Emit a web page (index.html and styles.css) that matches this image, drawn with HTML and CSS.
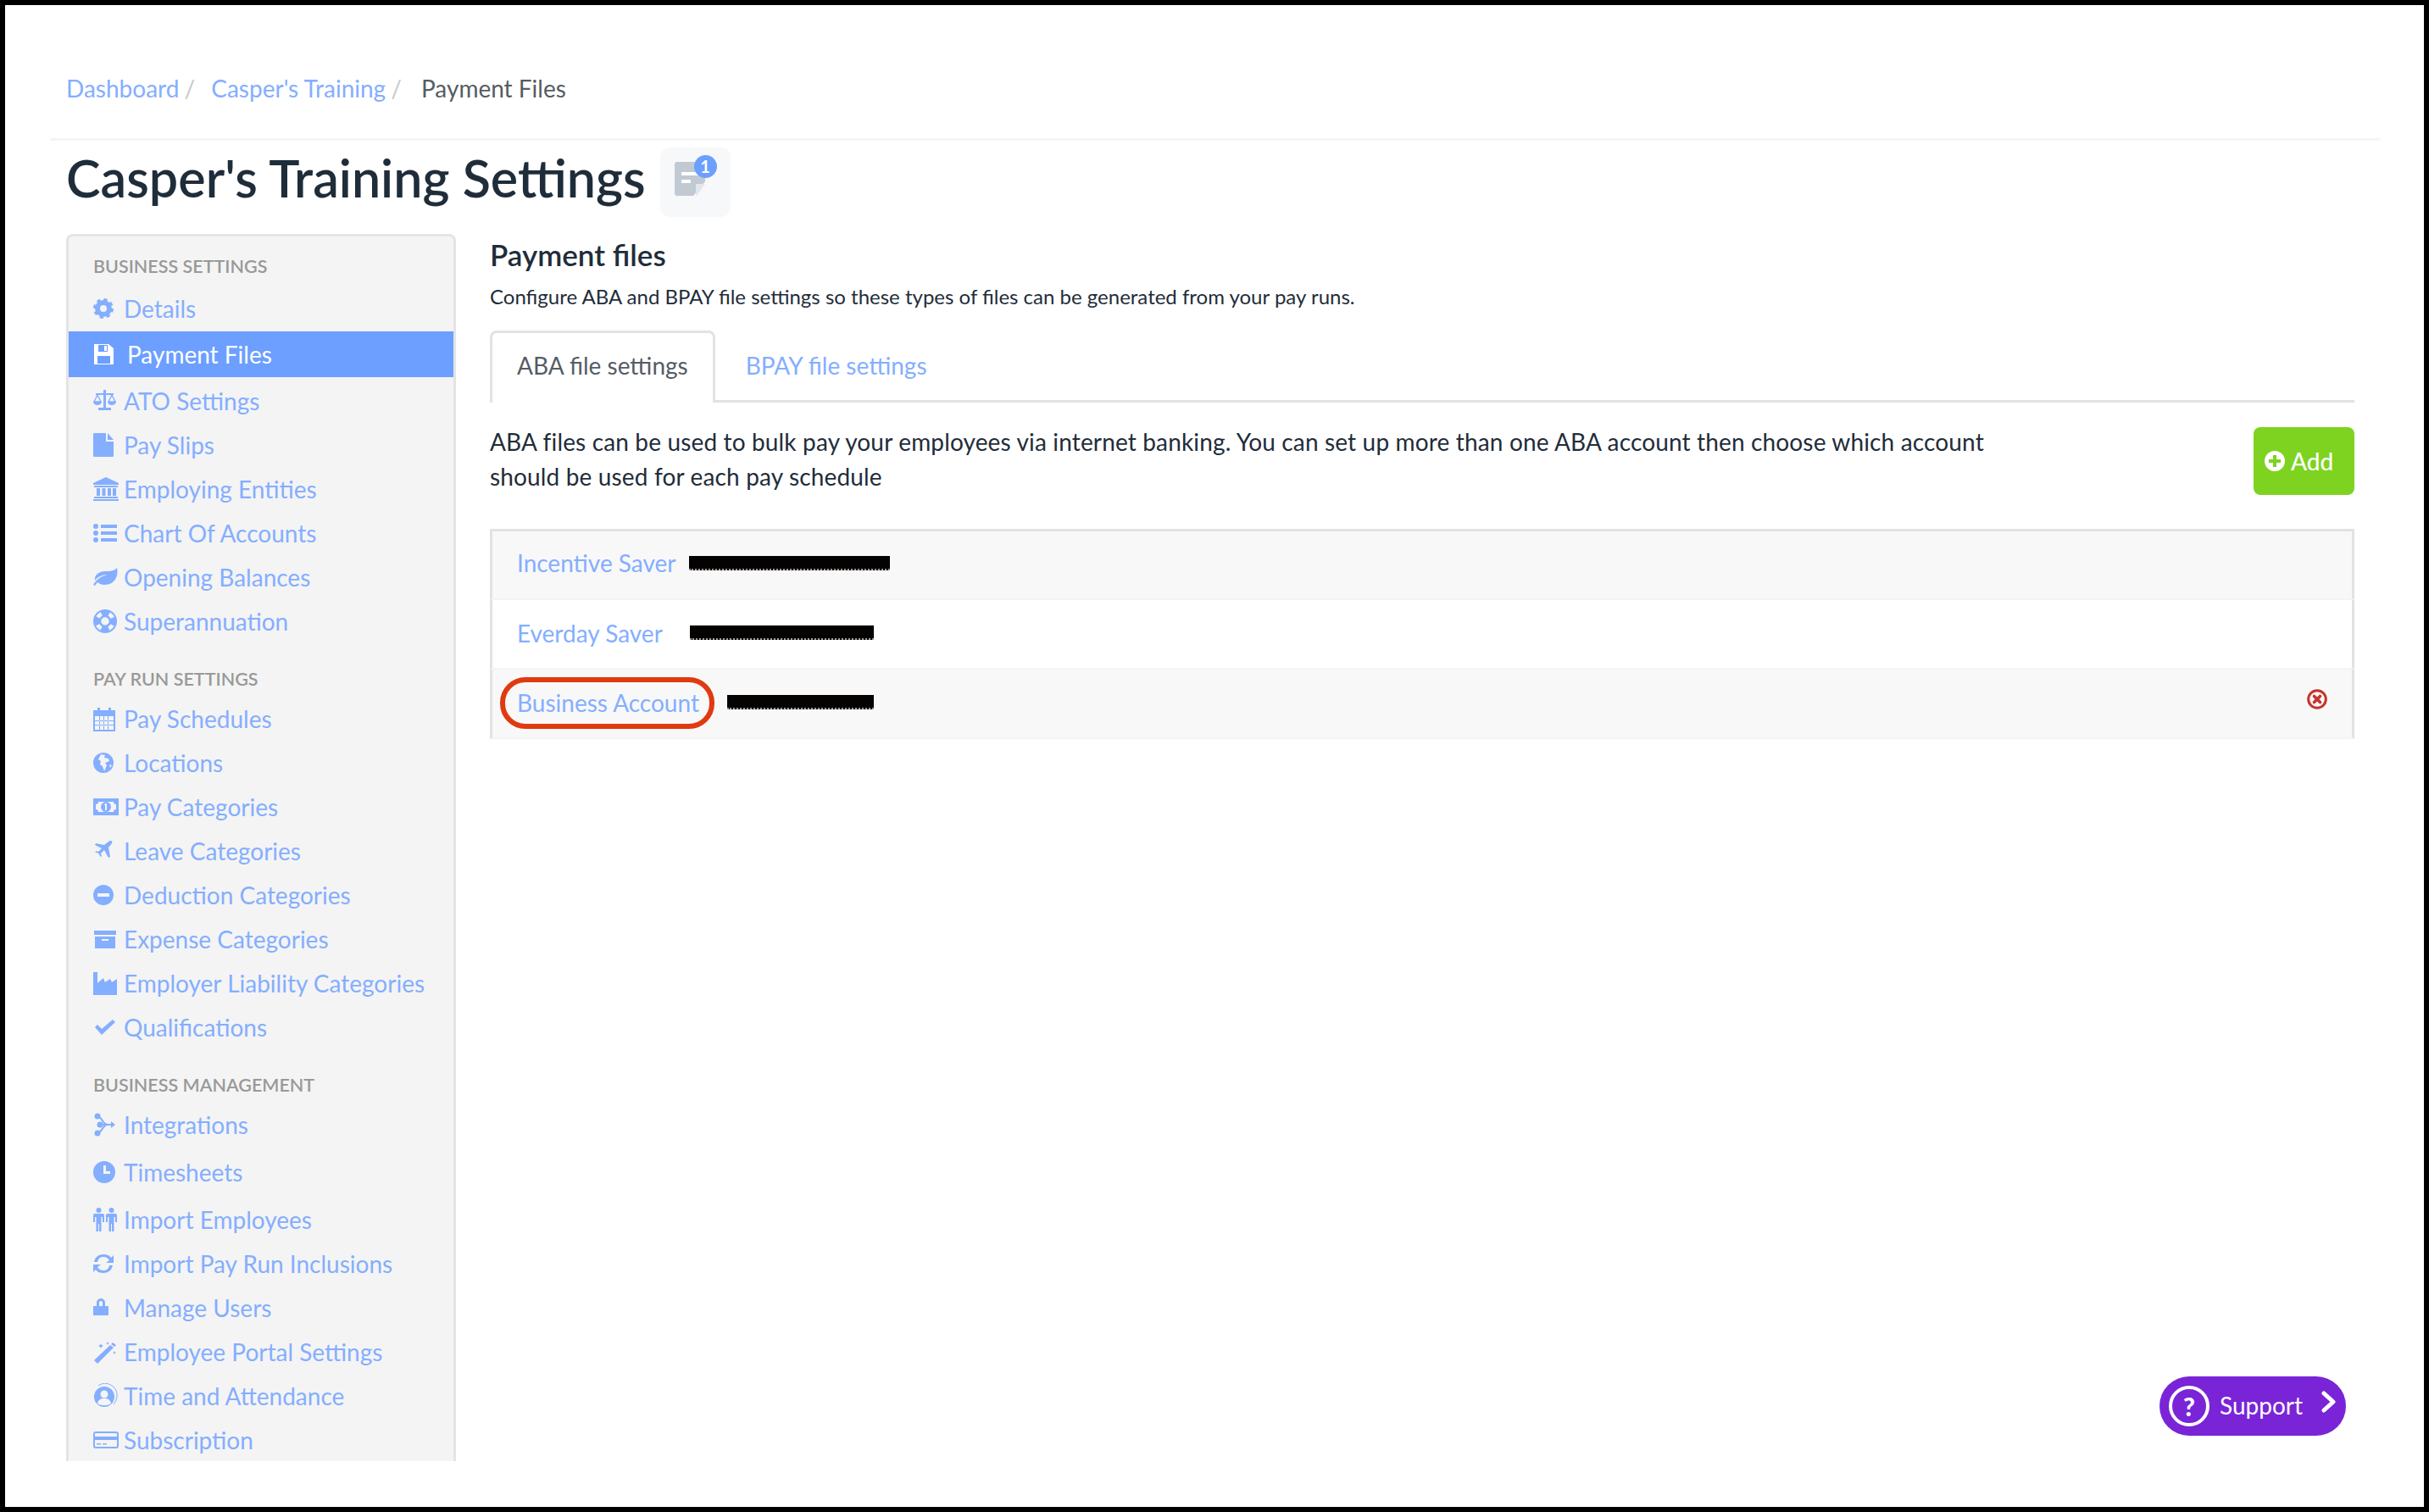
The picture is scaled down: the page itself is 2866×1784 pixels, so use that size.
FILE: index.html
```html
<!DOCTYPE html>
<html lang="en">
<head>
    <meta charset="UTF-8">
    <title>Casper's Training Settings</title>
    <link rel="stylesheet" href="styles.css">
</head>
<body>
    <nav class="breadcrumb">
        <a href="#">Dashboard</a><span class="sep">/</span>
        <a href="#">Casper's Training</a><span class="sep">/</span>
        <span class="current">Payment Files</span>
    </nav>

    <header class="page-head">
        <h1>Casper's Training Settings</h1>
        <div class="note-tile">
            <svg width="40" height="40" viewBox="0 0 40 40"><path d="M3 0h30a3 3 0 0 1 3 3v20L22 40H3a3 3 0 0 1-3-3V3a3 3 0 0 1 3-3z" fill="#c1c9d3"/><path d="M25 26h11L26 40h-1z" fill="#e3e7ec"/><rect x="8" y="12" width="20" height="4" fill="#fff"/><rect x="8" y="21" width="11" height="4" fill="#fff"/></svg>
            <span class="note-badge">1</span>
        </div>
    </header>

    <div class="layout">
        <aside class="sidebar">
            <h4 class="nav-head">Business Settings</h4>
            <a class="nav-item" href="#"><svg viewBox="0 0 30 30"><circle cx="12" cy="15" r="7" fill="none" stroke="currentColor" stroke-width="6"/><circle cx="12" cy="15" r="10.5" fill="none" stroke="currentColor" stroke-width="3" stroke-dasharray="4.2 4.05"/></svg>Details</a>
            <a class="nav-item active" href="#"><svg viewBox="0 0 30 30"><path d="M1 3h17l6 5v19H1zM6 4v8h11V4zM5 17v9h15v-9z" fill="currentColor" fill-rule="evenodd"/><rect x="13" y="5" width="3" height="6" fill="currentColor"/></svg>Payment Files</a>
            <a class="nav-item" href="#"><svg viewBox="0 0 30 30"><path d="M12 2h3v21h6v3H6v-3h6zM3 6h21v2H3z" fill="currentColor"/><path d="M5 8l-4 8h8zM22 8l-4 8h8z" fill="none" stroke="currentColor" stroke-width="1.4"/><path d="M0 16h10a5 4 0 0 1-10 0zM17 16h10a5 4 0 0 1-10 0z" fill="currentColor"/></svg>ATO Settings</a>
            <a class="nav-item" href="#"><svg viewBox="0 0 30 30"><path d="M1 1h14v10h9v17a1 1 0 0 1-1 1H1a1 1 0 0 1-1-1V2a1 1 0 0 1 1-1zM17 1l7 8h-7z" fill="currentColor"/></svg>Pay Slips</a>
            <a class="nav-item" href="#"><svg viewBox="0 0 30 30"><path d="M15 1l15 7v2H0V8zM1 11h28v2H1zM4 14h4v9H4zM10.500 14h4v9h-4zM17 14h4v9h-4zM23 14h4v9h-4zM1 24h28v2H1zM0 27h30v2H0z" fill="currentColor"/></svg>Employing Entities</a>
            <a class="nav-item" href="#"><svg viewBox="0 0 30 30"><circle cx="3" cy="7" r="3" fill="currentColor"/><circle cx="3" cy="15" r="3" fill="currentColor"/><circle cx="3" cy="23" r="3" fill="currentColor"/><path d="M9 5h19v4H9zM9 13h19v4H9zM9 21h19v4H9z" fill="currentColor"/></svg>Chart Of Accounts</a>
            <a class="nav-item" href="#"><svg viewBox="0 0 30 30"><path d="M28 4c2 9-2 20-15 20-3 0-6-1-8-3l-3 4-2-1c3-5 8-10 17-12-7 0-12 3-15 7C1 12 7 8 14 8c6 0 11 0 14-4z" fill="currentColor"/></svg>Opening Balances</a>
            <a class="nav-item" href="#"><svg viewBox="0 0 30 30"><circle cx="14" cy="15" r="13" fill="none" stroke="currentColor" stroke-width="2"/><circle cx="14" cy="15" r="6" fill="none" stroke="currentColor" stroke-width="2.500"/><circle cx="14" cy="15" r="9.500" fill="none" stroke="currentColor" stroke-width="6" stroke-dasharray="9 5.920" stroke-dashoffset="4.500"/></svg>Superannuation</a>

            <h4 class="nav-head nav-head-next">Pay Run Settings</h4>
            <a class="nav-item" href="#"><svg viewBox="0 0 30 30"><path d="M0 5h5V2h3v3h10V2h3v3h5v25H0zM2 12v16h22V12zM7 12v16h1V12zM12 12v16h1V12zM17 12v16h1V12zM2 17h22v1H2zM2 22h22v1H2z" fill="currentColor" fill-rule="evenodd"/></svg>Pay Schedules</a>
            <a class="nav-item" href="#"><svg viewBox="0 0 30 30"><circle cx="12" cy="15" r="12" fill="currentColor"/><path d="M9 5l5 1-1 3 5 1 1 3-5 2 2 3-3 7-2-6-3-2 1-4-3-2zM19 17l3 1-2 3z" fill="#f4f4f4"/></svg>Locations</a>
            <a class="nav-item" href="#"><svg viewBox="0 0 30 30"><path d="M0 5h30v20H0zM6 9a3 3 0 0 1-3 3v6a3 3 0 0 1 3 3h18a3 3 0 0 1 3-3v-6a3 3 0 0 1-3-3z" fill="currentColor" fill-rule="evenodd"/><circle cx="15" cy="15" r="6" fill="currentColor"/><path d="M14 11h2v8h-2zM12.500 12.500l2-1.500v2z" fill="#f4f4f4"/></svg>Pay Categories</a>
            <a class="nav-item" href="#"><svg viewBox="0 0 30 30"><path d="M21 3c1 0 2 1 1 3l-4 5 2 11-2 1-5-9-4 4 1 3-1.500 1-2-4-4-1.500L3 15l3 1 4-4-8-4 1-2 10 2 5-4c1-1 2-1 3-1z" fill="currentColor"/></svg>Leave Categories</a>
            <a class="nav-item" href="#"><svg viewBox="0 0 30 30"><path d="M12 3a12 12 0 1 1 0 24 12 12 0 0 1 0-24zM5 13v4h14v-4z" fill="currentColor" fill-rule="evenodd"/></svg>Deduction Categories</a>
            <a class="nav-item" href="#"><svg viewBox="0 0 30 30"><path d="M1 5h26v5H1zM2 12h24v14H2zM10 15v2h8v-2z" fill="currentColor" fill-rule="evenodd"/></svg>Expense Categories</a>
            <a class="nav-item" href="#"><svg viewBox="0 0 30 30"><path d="M0 2h5v13l7-6 2 5 6-4 2 4 6-4v19H0z" fill="currentColor"/></svg>Employer Liability Categories</a>
            <a class="nav-item" href="#"><svg viewBox="0 0 30 30"><path d="M2 15l3-3 5 5L23 6l3 3L10 24z" fill="currentColor"/></svg>Qualifications</a>

            <h4 class="nav-head nav-head-next">Business Management</h4>
            <a class="nav-item" href="#"><svg viewBox="0 0 30 30"><circle cx="5" cy="5" r="3.500" fill="currentColor"/><circle cx="5" cy="25" r="3.500" fill="currentColor"/><circle cx="8" cy="15" r="3.500" fill="currentColor"/><path d="M5 5c5 0 6 10 12 10M5 25c5 0 6-10 12-10M8 15h13" fill="none" stroke="currentColor" stroke-width="2"/><path d="M21 11l5 4-5 4z" fill="currentColor"/></svg>Integrations</a>
            <a class="nav-item nav-item-gap" href="#"><svg viewBox="0 0 30 30"><path d="M13 2a13 13 0 1 1 0 26 13 13 0 0 1 0-26zM12 7v10h8v-3h-5V7z" fill="currentColor" fill-rule="evenodd"/></svg>Timesheets</a>
            <a class="nav-item nav-item-gap" href="#"><svg viewBox="0 0 30 30"><circle cx="6.500" cy="4" r="3" fill="currentColor"/><circle cx="21.500" cy="4" r="3" fill="currentColor"/><path d="M2 8h9a2 2 0 0 1 2 2v8h-2v-6H9.500v17H7v-9H6v9H3.500V12H2v6H0v-8a2 2 0 0 1 2-2zM17 8h9a2 2 0 0 1 2 2v8h-2v-6h-1.500v17H22v-9h-1v9h-2.500V12H17v6h-2v-8a2 2 0 0 1 2-2z" fill="currentColor"/></svg>Import Employees</a>
            <a class="nav-item" href="#"><svg viewBox="0 0 30 30"><path d="M1 13C2 7 7 4 12 4c4 0 7 1 9 4l3-3v9H15l4-3c-2-3-4-4-7-4-4 0-6 2-7 6zM23 17c-1 6-6 9-11 9-4 0-7-1-9-4l-3 3v-9h9l-4 3c2 3 4 4 7 4 4 0 6-2 7-6z" fill="currentColor"/></svg>Import Pay Run Inclusions</a>
            <a class="nav-item" href="#"><svg viewBox="0 0 30 30"><path d="M4 13V9a5 5 0 0 1 10 0v4h3a1 1 0 0 1 1 1v9a1 1 0 0 1-1 1H1a1 1 0 0 1-1-1v-9a1 1 0 0 1 1-1zM7 13h4V9a2 2 0 0 0-4 0z" fill="currentColor" fill-rule="evenodd"/></svg>Manage Users</a>
            <a class="nav-item" href="#"><svg viewBox="0 0 30 30"><path d="M1 25L20 7l4 3L5 29zM21 6l2-2 4 3-2 2z" fill="currentColor"/><path d="M9 5l1 2 2 1-2 1-1 2-1-2-2-1 2-1zM17 3l.7 1.500 1.300.5-1.300.5L17 7l-.7-1.500L15 5l1.300-.5zM25 14l.7 1.500 1.300.5-1.300.5-.7 1.500-.7-1.500L23 16l1.300-.5z" fill="currentColor"/></svg>Employee Portal Settings</a>
            <a class="nav-item" href="#"><svg viewBox="0 0 30 30"><circle cx="13" cy="16" r="12" fill="currentColor"/><circle cx="13" cy="13" r="4.500" fill="#f4f4f4"/><path d="M5 24c1-5 4-6 8-6s7 1 8 6c-4 3-12 3-16 0z" fill="#f4f4f4"/><path d="M6 3a14 14 0 0 1 22 13 14 14 0 0 1-4 9" fill="none" stroke="currentColor" stroke-width="1"/></svg>Time and Attendance</a>
            <a class="nav-item" href="#"><svg viewBox="0 0 30 30"><path d="M3 5h24a3 3 0 0 1 3 3v14a3 3 0 0 1-3 3H3a3 3 0 0 1-3-3V8a3 3 0 0 1 3-3zM2 8v3h26V8a1 1 0 0 0-1-1H3a1 1 0 0 0-1 1zM2 15v7a1 1 0 0 0 1 1h24a1 1 0 0 0 1-1v-7zM4 19h5v1.500H4zM11 19h5v1.500h-5z" fill="currentColor" fill-rule="evenodd"/></svg>Subscription</a>
        </aside>

        <main class="content">
            <h2>Payment files</h2>
            <p class="lead">Configure ABA and BPAY file settings so these types of files can be generated from your pay runs.</p>

            <div class="tabs">
                <a class="tab active" href="#">ABA file settings</a>
                <a class="tab" href="#">BPAY file settings</a>
            </div>

            <div class="intro">
                <p>ABA files can be used to bulk pay your employees via internet banking. You can set up more than one ABA account then choose which account should be used for each pay schedule</p>
                <a class="btn-add" href="#"><svg width="24" height="24" viewBox="0 0 24 24"><path d="M12 0a12 12 0 1 1 0 24 12 12 0 0 1 0-24zM10 5v5H5v4h5v5h4v-5h5v-4h-5V5z" fill="currentColor" fill-rule="evenodd"/></svg>Add</a>
            </div>

            <div class="accounts">
                <div class="account">
                    <a class="account-name" href="#">Incentive Saver</a>
                    <span class="redact redact-long"></span>
                </div>
                <div class="account">
                    <a class="account-name" href="#">Everday Saver</a>
                    <span class="redact redact-mid"></span>
                </div>
                <div class="account">
                    <a class="account-name circled" href="#">Business Account</a>
                    <span class="redact redact-short"></span>
                    <a class="delete" href="#"><svg width="24" height="24" viewBox="0 0 24 24"><circle cx="12" cy="12" r="10.300" fill="none" stroke="currentColor" stroke-width="3"/><path d="M8.500 8.500l7 7M15.500 8.500l-7 7" stroke="currentColor" stroke-width="3.600" stroke-linecap="round"/></svg></a>
                </div>
            </div>
        </main>
    </div>

    <a class="support" href="#">
        <span class="support-q">?</span>
        <span class="support-label">Support</span>
        <svg width="18" height="26" viewBox="0 0 18 26"><path d="M3 3l11 10L3 23" fill="none" stroke="currentColor" stroke-width="5" stroke-linecap="round" stroke-linejoin="round"/></svg>
    </a>
</body>
</html>
```

FILE: styles.css
```css
* {
    box-sizing: border-box;
}

body {
    margin: 0;
    height: 1784px;
    position: relative;
    overflow: hidden;
    background: #fff;
    border: 6px solid #000;
    font-family: Lato, "Open Sans", sans-serif;
    font-size: 28px;
    color: #1f2d3a;
}

a {
    color: #84aeff;
    text-decoration: none;
}

/* Top of the page */
.breadcrumb {
    padding: 78px 0 39px 72px;
    line-height: 40px;
}

.breadcrumb .sep {
    color: #c8c8c8;
    margin: 0 12px 0 6px;
}

.breadcrumb .current {
    margin-left: 4px;
    color: #555c63;
}

.page-head {
    margin: 0 52px 0 53px;
    padding: 8px 0 0 19px;
    border-top: 3px solid #f5f5f5;
    display: flex;
    align-items: center;
}

h1 {
    margin: 0 0 10px;
    font-size: 61px;
    font-weight: 600;
    line-height: 72px;
    color: #1f2d3a;
}

.note-tile {
    position: relative;
    width: 83px;
    height: 82px;
    margin-left: 17px;
    padding: 17px 0 0 17px;
    background: #f7f8fa;
    border-radius: 12px;
}

.note-badge {
    position: absolute;
    top: 9px;
    left: 40px;
    width: 27px;
    height: 27px;
    border-radius: 50%;
    background: #6c9fff;
    color: #fff;
    font-size: 20px;
    font-weight: 700;
    line-height: 27px;
    text-align: center;
}

.layout {
    display: flex;
    gap: 40px;
    padding: 20px 82px 0 72px;
}

/* Sidebar */
.sidebar {
    width: 460px;
    height: 1448px;
    flex: none;
    overflow: hidden;
    background: #f4f4f4;
    border: 3px solid #e4e4e4;
    border-bottom: 0;
    border-radius: 8px 8px 0 0;
}

.nav-head {
    margin: 20px 0 9px 29px;
    font-size: 21.5px;
    font-weight: 600;
    line-height: 30px;
    color: #999;
    text-transform: uppercase;
}

.nav-head-next {
    margin-top: 27px;
    margin-bottom: 6px;
}

.nav-item {
    display: flex;
    align-items: center;
    height: 52px;
    padding-left: 29px;
}

.nav-item svg {
    width: 30px;
    height: 30px;
    flex: none;
    margin-right: 6px;
}

.nav-item.active {
    height: 54px;
    margin: 1px 0 2px;
    background: #6c9fff;
    color: #fff;
}

.nav-item.active svg {
    margin-right: 10px;
}

.nav-item-gap {
    margin-top: 4px;
}

/* Main column */
.content {
    flex: 1;
    padding-top: 4px;
}

h2 {
    margin: 0;
    font-size: 35px;
    font-weight: 600;
    line-height: 40px;
}

.lead {
    margin: 15px 0 0;
    font-size: 24px;
    line-height: 30px;
}

.tabs {
    display: flex;
    margin-top: 25px;
    border-bottom: 3px solid #e2e2e2;
}

.tab {
    padding: 18px 29px 21px;
    margin-right: 4px;
    line-height: 40px;
    border: 3px solid transparent;
    border-bottom: 0;
    border-radius: 8px 8px 0 0;
}

.tab.active {
    margin-bottom: -3px;
    padding-bottom: 24px;
    background: #fff;
    color: #555c63;
    border-color: #e2e2e2;
}

.intro {
    display: flex;
    justify-content: space-between;
    align-items: flex-start;
    padding-top: 26px;
}

.intro p {
    width: 1790px;
    margin: 0;
    line-height: 41px;
    letter-spacing: 0.15px;
}

.btn-add {
    display: flex;
    align-items: center;
    gap: 7px;
    width: 119px;
    height: 80px;
    margin-top: 3px;
    padding-left: 13px;
    background: #7ed321;
    border-radius: 8px;
    color: #fff;
    font-size: 28px;
    font-weight: 500;
}

.accounts {
    margin-top: 40px;
}

.account {
    display: flex;
    align-items: center;
    height: 82px;
    padding: 0 0 3px 29px;
    border-style: solid;
    border-width: 0 3px 2px;
    border-color: #e2e2e2 #e2e2e2 #f4f4f4;
}

.account:nth-child(odd) {
    background: #f8f8f8;
}

.account:first-child {
    height: 84px;
    padding-bottom: 5px;
    border-top-width: 3px;
}

.account-name {
    position: relative;
    line-height: 40px;
}

/* the hand-drawn ring round the account in question */
.circled::after {
    content: "";
    position: absolute;
    left: -20px;
    right: -18px;
    top: -10px;
    bottom: -11px;
    border: 6px solid #e03a10;
    border-radius: 30px;
}

/* account numbers blacked out by hand, a little of the digits still shows */
.redact {
    height: 17px;
    background: #050202;
    border-bottom: 2px dotted #999;
}

.redact-long {
    width: 237px;
    margin-left: 15px;
}

.redact-mid {
    width: 217px;
    margin-left: 32px;
}

.redact-short {
    width: 173px;
    margin-left: 33px;
}

.delete {
    margin: -16px 29px 0 auto;
    height: 24px;
    color: #c8332b;
}

/* Floating help button */
.support {
    position: absolute;
    right: 92px;
    bottom: 84px;
    width: 220px;
    height: 70px;
    padding-left: 11px;
    display: flex;
    align-items: center;
    background: #7a24d8;
    border-radius: 35px;
    color: #fff;
    font-size: 28px;
}

.support-q {
    width: 48px;
    height: 48px;
    margin-right: 12px;
    border: 4px solid #fff;
    border-radius: 50%;
    font-size: 30px;
    font-weight: 900;
    line-height: 40px;
    text-align: center;
}

.support-label {
    margin-top: -2px;
}

.support svg {
    margin: -10px 0 0 22px;
}
```
